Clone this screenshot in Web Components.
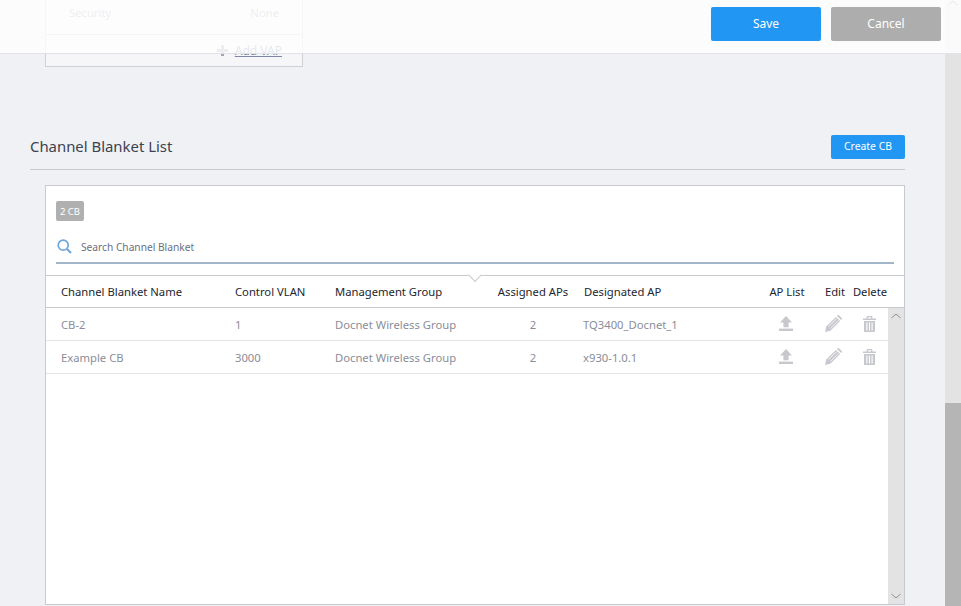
<!DOCTYPE html>
<html lang="en">
<head>
<meta charset="utf-8">
<title>Channel Blanket List</title>
<style>
	html, body { margin: 0; height: 100%; overflow: hidden; }
	body { font-family: "Noto Sans", "Open Sans", sans-serif; }
</style>
</head>
<body>
<cb-app>
	<vap-card></vap-card>
	<cb-section heading="Channel Blanket List" action="Create CB">
		<cb-panel count="2 CB" placeholder="Search Channel Blanket">
			<cb-row kind="head">
				<span>Channel Blanket Name</span><span>Control VLAN</span><span>Management Group</span>
				<span class="mid">Assigned APs</span><span class="ap">Designated AP</span>
				<span class="mid">AP List</span><span class="mid edit">Edit</span><span class="mid">Delete</span>
			</cb-row>
			<cb-row slot="rows">
				<span>CB-2</span><span>1</span><span>Docnet Wireless Group</span>
				<span class="mid">2</span><span class="ap">TQ3400_Docnet_1</span>
				<cb-icon class="mid" name="upload"></cb-icon><cb-icon class="mid" name="edit"></cb-icon><cb-icon class="mid" name="trash"></cb-icon>
			</cb-row>
			<cb-row slot="rows">
				<span>Example CB</span><span>3000</span><span>Docnet Wireless Group</span>
				<span class="mid">2</span><span class="ap">x930-1.0.1</span>
				<cb-icon class="mid" name="upload"></cb-icon><cb-icon class="mid" name="edit"></cb-icon><cb-icon class="mid" name="trash"></cb-icon>
			</cb-row>
		</cb-panel>
	</cb-section>
</cb-app>

<script>
const ICONS = {
	upload: `<svg width="14" height="15" viewBox="0 0 14 15"><path d="M7 0l6 6.4H9.6v4.800H4.400V6.400H1z"/><rect y="12.600" width="14" height="2.400"/></svg>`,
	edit: `<svg width="17" height="17" viewBox="0 0 17 17"><path d="M0 17l1.300-5.400L11 1.900 15.100 6l-9.700 9.700z"/><path d="M12 .9l.6-.6c.4-.4 1-.4 1.400 0l2.700 2.700c.4.4.4 1 0 1.400l-.6.6z"/><path d="M3.600 11.600l8-8M5.400 13.400l8-8" stroke="#fff" stroke-width=".8" fill="none"/></svg>`,
	trash: `<svg width="13" height="16" viewBox="0 0 13 16"><path d="M0 2.400h3.600V1c0-.6.4-1 1-1h3.800c.6 0 1 .4 1 1v1.400H13v1.600H0zM4.900 1.200v1.200h3.200V1.200z"/><path d="M1 5h11v10c0 .6-.4 1-1 1H2c-.6 0-1-.4-1-1z"/><path d="M3.900 6.400v8M6.500 6.400v8M9.100 6.400v8" stroke="#fff" stroke-width="1.100" fill="none"/></svg>`,
};

class CbIcon extends HTMLElement {
	connectedCallback() {
		this.attachShadow({ mode: "open" }).innerHTML = `
			<style>
				:host { display: flex; align-items: center; justify-content: center; padding-right: 2px; padding-bottom: 1px; }
				svg { display: block; fill: #c6c8cd; }
			</style>
			${ICONS[this.getAttribute("name")]}
		`;
	}
}

class CbButton extends HTMLElement {
	connectedCallback() {
		this.attachShadow({ mode: "open" }).innerHTML = `
			<style>
				:host {
					display: flex;
					align-items: center;
					justify-content: center;
					box-sizing: border-box;
					width: var(--w, 110px);
					height: var(--h, 34px);
					padding-bottom: 2px;
					border-radius: 2px;
					background: var(--bg, #2196f3);
					color: #fff;
					font-size: var(--fs, 12px);
				}
			</style>
			<slot></slot>
		`;
	}
}

class CbScrollbar extends HTMLElement {
	connectedCallback() {
		this.attachShadow({ mode: "open" }).innerHTML = `
			<style>
				:host {
					display: flex;
					flex-direction: column;
					flex: none;
					width: 16px;
					background: #e3e3e3;
					height: 100%;
				}
				.end { height: 16px; display: flex; align-items: center; justify-content: center; }
				.grow { flex: 1; }
				svg { display: block; fill: none; stroke: #8e8e8e; stroke-width: 1; }
				.thumb { height: var(--thumb, 0); background: #b5b5b5; }
			</style>
			<div class="end" part="up"><svg width="10" height="6" viewBox="0 0 10 6"><path d="M.5 5L5 1l4.500 4"/></svg></div>
			<div class="grow"></div>
			<div class="thumb"></div>
			<div class="end" part="down"><svg width="10" height="6" viewBox="0 0 10 6"><path d="M.5 1L5 5l4.500-4"/></svg></div>
		`;
	}
}

class CbApp extends HTMLElement {
	connectedCallback() {
		this.attachShadow({ mode: "open" }).innerHTML = `
			<style>
				:host {
					display: flex;
					height: 606px;
					width: 961px;
					position: relative;
					overflow: hidden;
					background: #f0f1f5;
				}
				main { flex: 1; min-width: 0; }
				.bar {
					position: absolute;
					left: 0;
					top: 0;
					right: 0;
					height: 46px;
					padding: 7px 20px 0 0;
					border-bottom: 1px solid #e2e3e8;
					background: rgba(255, 255, 255, 0.8);
					display: flex;
					justify-content: flex-end;
					gap: 10px;
				}
				.page-scroll { --thumb: 203px; }
				.page-scroll::part(up) { height: 6px; }
				.page-scroll::part(down) { display: none; }
			</style>
			<main><slot></slot></main>
			<cb-scrollbar class="page-scroll"></cb-scrollbar>
			<div class="bar">
				<cb-button>Save</cb-button>
				<cb-button style="--bg:#adadad">Cancel</cb-button>
			</div>
		`;
	}
}

class VapCard extends HTMLElement {
	connectedCallback() {
		this.attachShadow({ mode: "open" }).innerHTML = `
			<style>
				:host {
					display: block;
					box-sizing: border-box;
					width: 258px;
					height: 67px;
					margin-left: 45px;
					background: #f6f6f9;
					border: 1px solid #cfd0d5;
					border-top: 0;
					font-size: 11.250px;
					color: #a3a6b4;
				}
				.row {
					display: flex;
					justify-content: space-between;
					height: 35px;
					box-sizing: border-box;
					padding: 5px 23px 0;
					border-bottom: 1px solid #c9cbd3;
				}
				.add {
					display: flex;
					justify-content: flex-end;
					align-items: center;
					gap: 7px;
					padding: 7px 20px 0 0;
					font-size: 12px;
				}
				a { color: #7f86a8; text-decoration: underline; }
				svg { display: block; fill: #a0a4b4; }
			</style>
			<div class="row"><span>Security</span><span>None</span></div>
			<div class="add">
				<svg width="11" height="11" viewBox="0 0 11 11"><path d="M4 0h3v4h4v3H7v4H4V7H0V4h4z"/></svg>
				<a>Add VAP</a>
			</div>
		`;
	}
}

class CbSection extends HTMLElement {
	connectedCallback() {
		this.attachShadow({ mode: "open" }).innerHTML = `
			<style>
				:host { display: block; padding: 68px 40px 0 30px; }
				header {
					display: flex;
					justify-content: space-between;
					align-items: flex-start;
					height: 34px;
					border-bottom: 1px solid #c9cacf;
				}
				h2 {
					margin: 0;
					font-size: 14.900px;
					font-weight: 400;
					line-height: 22px;
					color: #3b4250;
				}
				cb-button { --w: 74px; --h: 24px; --fs: 10.400px; }
				.body { margin: 15px 0 0 15px; }
			</style>
			<header>
				<h2>${this.getAttribute("heading")}</h2>
				<cb-button>${this.getAttribute("action")}</cb-button>
			</header>
			<div class="body"><slot></slot></div>
		`;
	}
}

class CbPanel extends HTMLElement {
	connectedCallback() {
		this.attachShadow({ mode: "open" }).innerHTML = `
			<style>
				:host {
					display: flex;
					flex-direction: column;
					box-sizing: border-box;
					height: 420px;
					background: #fff;
					border: 1px solid #c9cacf;
				}
				.top { padding: 15px 10px 0; height: 89px; box-sizing: border-box; flex: none; }
				.badge {
					width: 28px;
					height: 20px;
					border-radius: 2px;
					background: #b0b0b0;
					color: #fff;
					font-size: 9.500px;
					display: flex;
					align-items: center;
					justify-content: center;
				}
				.search {
					display: flex;
					align-items: center;
					gap: 9px;
					height: 31px;
					margin-top: 10px;
					padding-left: 1px;
					border-bottom: 2px solid #a2b5c9;
					font-size: 10.200px;
					color: #6b7080;
				}
				.search svg { display: block; fill: none; stroke: #6fa5da; }
				.head {
					position: relative;
					border-top: 1px solid #c9cacf;
					border-bottom: 1px solid #c9cacf;
					height: 31px;
					flex: none;
				}
				.head::after {
					content: "";
					position: absolute;
					left: 424px;
					top: -6px;
					width: 9px;
					height: 9px;
					background: #fff;
					border-right: 1px solid #c9cacf;
					border-bottom: 1px solid #c9cacf;
					transform: rotate(45deg);
				}
				.list { flex: 1; display: flex; min-height: 0; }
				.rows { flex: 1; min-width: 0; }
			</style>
			<div class="top">
				<div class="badge">${this.getAttribute("count")}</div>
				<div class="search">
					<svg width="15" height="15" viewBox="0 0 15 15"><circle cx="6.200" cy="6.200" r="5" stroke-width="1.700"/><path d="M10 10l4 4" stroke-width="2.200"/></svg>
					<span>${this.getAttribute("placeholder")}</span>
				</div>
			</div>
			<div class="head"><slot></slot></div>
			<div class="list">
				<div class="rows"><slot name="rows"></slot></div>
				<cb-scrollbar></cb-scrollbar>
			</div>
		`;
	}
}

class CbRow extends HTMLElement {
	connectedCallback() {
		const isHead = this.getAttribute("kind") === "head";
		this.attachShadow({ mode: "open" }).innerHTML = `
			<style>
				:host {
					display: block;
					box-sizing: border-box;
					height: ${isHead ? "31px" : "33px"};
					font-size: 11.250px;
					color: ${isHead ? "#22262e" : "#8b8d99"};
					${isHead ? "" : "border-bottom: 1px solid #e3e4e8;"}
				}
				.grid {
					display: grid;
					grid-template-columns: 174px 100px 150px 96px 185px 42px 52px 20px;
					align-items: center;
					height: 100%;
					padding-left: 15px;
				}
				::slotted(.mid) { display: flex; justify-content: center; white-space: nowrap; }
				::slotted(.ap) { padding-left: ${isHead ? "3px" : "2px"}; }
				::slotted(.edit) { padding-left: 2px; }
			</style>
			<div class="grid"><slot></slot></div>
		`;
	}
}

customElements.define("cb-icon", CbIcon);
customElements.define("cb-button", CbButton);
customElements.define("cb-scrollbar", CbScrollbar);
customElements.define("cb-app", CbApp);
customElements.define("vap-card", VapCard);
customElements.define("cb-section", CbSection);
customElements.define("cb-panel", CbPanel);
customElements.define("cb-row", CbRow);
</script>
</body>
</html>
